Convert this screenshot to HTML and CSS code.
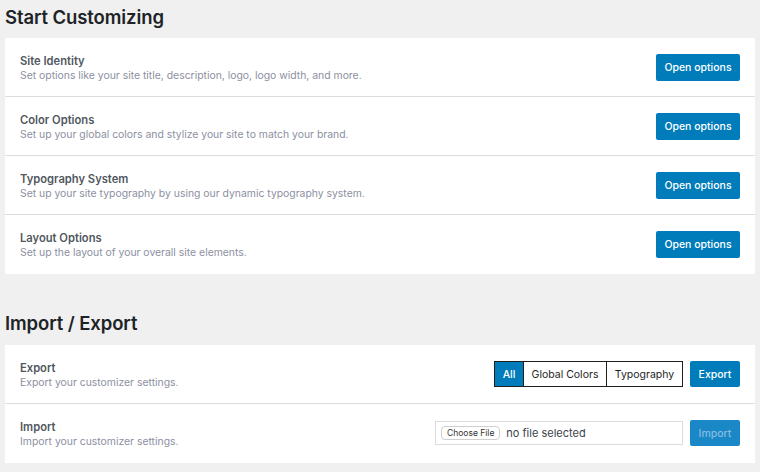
FILE: index.html
```html
<!DOCTYPE html>
<html>
<head>
<meta charset="utf-8">
<link rel="stylesheet" href="styles.css">
</head>
<body>
<h2 class="section-title">Start Customizing</h2>
<div class="card">
  <div class="row">
    <div class="info">
      <div class="title">Site Identity</div>
      <div class="desc">Set options like your site title, description, logo, logo width, and more.</div>
    </div>
    <button class="btn">Open options</button>
  </div>
  <div class="row">
    <div class="info">
      <div class="title">Color Options</div>
      <div class="desc">Set up your global colors and stylize your site to match your brand.</div>
    </div>
    <button class="btn">Open options</button>
  </div>
  <div class="row">
    <div class="info">
      <div class="title">Typography System</div>
      <div class="desc">Set up your site typography by using our dynamic typography system.</div>
    </div>
    <button class="btn">Open options</button>
  </div>
  <div class="row">
    <div class="info">
      <div class="title">Layout Options</div>
      <div class="desc">Set up the layout of your overall site elements.</div>
    </div>
    <button class="btn">Open options</button>
  </div>
</div>

<h2 class="section-title second">Import / Export</h2>
<div class="card">
  <div class="row">
    <div class="info">
      <div class="title">Export</div>
      <div class="desc">Export your customizer settings.</div>
    </div>
    <div class="actions">
      <div class="seg">
        <span class="seg-item active">All</span>
        <span class="seg-item">Global Colors</span>
        <span class="seg-item">Typography</span>
      </div>
      <button class="btn small">Export</button>
    </div>
  </div>
  <div class="row">
    <div class="info">
      <div class="title">Import</div>
      <div class="desc">Import your customizer settings.</div>
    </div>
    <div class="actions">
      <div class="file">
        <span class="choose">Choose File</span>
        <span class="nofile">no file selected</span>
      </div>
      <button class="btn small disabled">Import</button>
    </div>
  </div>
</div>
</body>
</html>
```
FILE: styles.css
```css
html, body {
  margin: 0;
  padding: 0;
  background: #f0f0f0;
}
body {
  padding: 0 5px;
  font-family: Inter, "Liberation Sans", sans-serif;
  color: #1d2327;
}
.section-title {
  margin: 0;
  height: 38px;
  box-sizing: border-box;
  padding-top: 4px;
  font-size: 18.5px;
  font-weight: 600;
  line-height: 26px;
  color: #1d2327;
  letter-spacing: -0.1px;
}
.section-title.second {
  margin-top: 32px;
  height: 39px;
}
.card {
  background: #fff;
}
.row {
  display: flex;
  align-items: center;
  justify-content: space-between;
  height: 58px;
  padding: 0 15px;
  border-bottom: 1px solid #dcdcde;
}
.row:last-child {
  border-bottom-color: #fff;
}
.info {
  padding-top: 2px;
}
.title {
  font-size: 11.2px;
  font-weight: 600;
  color: #50575e;
  line-height: 15px;
}
.desc {
  font-size: 10.4px;
  color: #8c8f9f;
  line-height: 14px;
}
.btn {
  font-family: Inter, "Liberation Sans", sans-serif;
  background: #007cba;
  color: #fff;
  border: none;
  border-radius: 2px;
  height: 27px;
  width: 84px;
  font-size: 10.5px;
  font-weight: 500;
  padding: 0;
}
.btn.small {
  width: 50px;
  height: 26px;
}
.btn.disabled {
  background: #1a87c6;
  color: #86bde2;
}
.actions {
  display: flex;
  align-items: center;
  gap: 7px;
}
.seg {
  display: flex;
  height: 26px;
  border: 1px solid #1e1e1e;
  box-sizing: border-box;
}
.seg-item {
  display: flex;
  align-items: center;
  justify-content: center;
  box-sizing: border-box;
  padding: 0;
  font-size: 10.5px;
  color: #1e1e1e;
  background: #fff;
  border-left: 1px solid #1e1e1e;
}
.seg-item:first-child {
  border-left: none;
}
.seg-item.active {
  width: 28px;
  background: #007cba;
  color: #fff;
  font-weight: 500;
}
.seg-item:nth-child(2) { width: 83px; }
.seg-item:nth-child(3) { width: 76px; }
.file {
  display: flex;
  align-items: center;
  width: 248px;
  height: 24px;
  box-sizing: border-box;
  border: 1px solid #dcdcde;
  padding: 0 6px 0 5px;
  gap: 6px;
}
.choose {
  font-size: 8.5px;
  color: #333;
  border: 1px solid #cfcfcf;
  border-radius: 4px;
  padding: 1px 5px;
  background: #fff;
}
.nofile {
  font-size: 11px;
  color: #3c434a;
}
```
